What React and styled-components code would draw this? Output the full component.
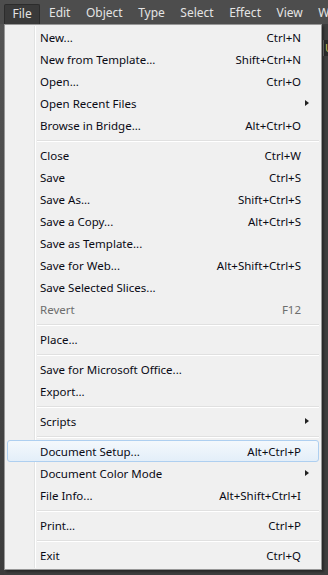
import React from 'react';
import styled, { createGlobalStyle, css } from 'styled-components';

const GlobalStyle = createGlobalStyle`
  html, body {
    margin: 0;
    padding: 0;
    background: #4a4a4a;
  }
  body {
    font-family: "Noto Sans", "Open Sans", sans-serif;
  }
`;

const Screen = styled.div`
  width: 328px;
  height: 575px;
  overflow: hidden;
  background: #3b3b3b;
  display: flex;
  flex-direction: column;
`;

const MenuBar = styled.div`
  height: 24px;
  display: flex;
  align-items: flex-end;
  padding-left: 4px;
  background: #4d4d4d;
  flex-shrink: 0;
  overflow: hidden;
`;

const BarItem = styled.div`
  height: 24px;
  display: flex;
  align-items: center;
  padding: 0 7.75px;
  font-size: 12px;
  color: #e4e4e4;
  white-space: nowrap;
  box-sizing: border-box;
  flex-shrink: 0;
  ${p => p.$open && css`
    height: 20px;
    padding: 0 7.5px 2px;
    margin-right: 1px;
    background: #3a3a3a;
    border: 1px solid #2c2c2c;
    border-bottom: none;
    border-radius: 2px 2px 0 0;
  `}
`;

const Body = styled.div`
  flex: 1;
  display: flex;
  background: #3e3e3e;
`;

const LeftStrip = styled.div`
  width: 4px;
  flex-shrink: 0;
  background: linear-gradient(#545454, #3c3c3c);
`;

const Panel = styled.div`
  width: 318px;
  height: 546px;
  flex-shrink: 0;
  box-sizing: border-box;
  background: #f0f0f0;
  border: 1px solid #979797;
  padding: 1px 2px;
  position: relative;
  box-shadow: 2px 2px 2px rgba(0, 0, 0, 0.35);
  display: flex;
  flex-direction: column;
  font-size: 11.5px;

  &::before {
    content: '';
    position: absolute;
    left: 29px;
    top: 1px;
    bottom: 1px;
    width: 1px;
    background: #e2e3e3;
    box-shadow: 1px 0 0 #ffffff;
  }
`;

const RightStrip = styled.div`
  flex: 1;
  min-width: 0;
  display: flex;
  flex-direction: column;
  padding-top: 16px;
  padding-left: 1px;
`;

const Field = styled.div`
  height: 16px;
  background: #2a2a2a;
  border-left: 1px solid #777;
  color: #cfc060;
  font-size: 11px;
  line-height: 16px;
  overflow: hidden;
  padding-left: 1px;
`;

const Row = styled.div`
  height: 22px;
  display: flex;
  align-items: center;
  padding-left: 32px;
  padding-right: 17px;
  position: relative;
  color: ${p => (p.$disabled ? '#6d6d6d' : '#0a0a14')};
  white-space: nowrap;
  box-sizing: border-box;
  border: 1px solid transparent;
  border-radius: 3px;
  ${p => p.$active && css`
    background: linear-gradient(#f4f8fc, #e3eef9);
    border-color: #aecff0;
  `}
`;

const Label = styled.span`
  flex: 1;
`;

const Shortcut = styled.span`
  text-align: right;
`;

const Arrow = styled.span`
  position: absolute;
  right: 9px;
  top: 7px;
  width: 0;
  height: 0;
  border-top: 3.5px solid transparent;
  border-bottom: 3.5px solid transparent;
  border-left: 4px solid #222;
`;

const Separator = styled.div`
  height: 8px;
  display: flex;
  align-items: center;
  padding-left: 30px;
  &::after {
    content: '';
    flex: 1;
    height: 1px;
    background: #e0e0e0;
    box-shadow: 0 1px 0 #ffffff;
  }
`;

const items = [
  ['New...', 'Ctrl+N'],
  ['New from Template...', 'Shift+Ctrl+N'],
  ['Open...', 'Ctrl+O'],
  ['Open Recent Files', '', 'sub'],
  ['Browse in Bridge...', 'Alt+Ctrl+O'],
  '-',
  ['Close', 'Ctrl+W'],
  ['Save', 'Ctrl+S'],
  ['Save As...', 'Shift+Ctrl+S'],
  ['Save a Copy...', 'Alt+Ctrl+S'],
  ['Save as Template...', ''],
  ['Save for Web...', 'Alt+Shift+Ctrl+S'],
  ['Save Selected Slices...', ''],
  ['Revert', 'F12', 'disabled'],
  '-',
  ['Place...', ''],
  '-',
  ['Save for Microsoft Office...', ''],
  ['Export...', ''],
  '-',
  ['Scripts', '', 'sub'],
  '-',
  ['Document Setup...', 'Alt+Ctrl+P', 'active'],
  ['Document Color Mode', '', 'sub'],
  ['File Info...', 'Alt+Shift+Ctrl+I'],
  '-',
  ['Print...', 'Ctrl+P'],
  '-',
  ['Exit', 'Ctrl+Q'],
];

const menuNames = ['File', 'Edit', 'Object', 'Type', 'Select', 'Effect', 'View', 'Window'];

const App = () => {
  return (
    <>
      <GlobalStyle />
      <Screen>
        <MenuBar>
          {menuNames.map((name, i) => (
            <BarItem key={i} $open={i === 0}>{name}</BarItem>
          ))}
        </MenuBar>
        <Body>
          <LeftStrip />
          <Panel>
            {items.map((item, i) => {
              if (item === '-') return <Separator key={i} />;
              const [label, shortcut, flag] = item;
              return (
                <Row key={i} $disabled={flag === 'disabled'} $active={flag === 'active'}>
                  <Label>{label}</Label>
                  <Shortcut>{shortcut}</Shortcut>
                  {flag === 'sub' && <Arrow />}
                </Row>
              );
            })}
          </Panel>
          <RightStrip>
            <Field>Ur</Field>
          </RightStrip>
        </Body>
      </Screen>
    </>
  );
};

export default App;
